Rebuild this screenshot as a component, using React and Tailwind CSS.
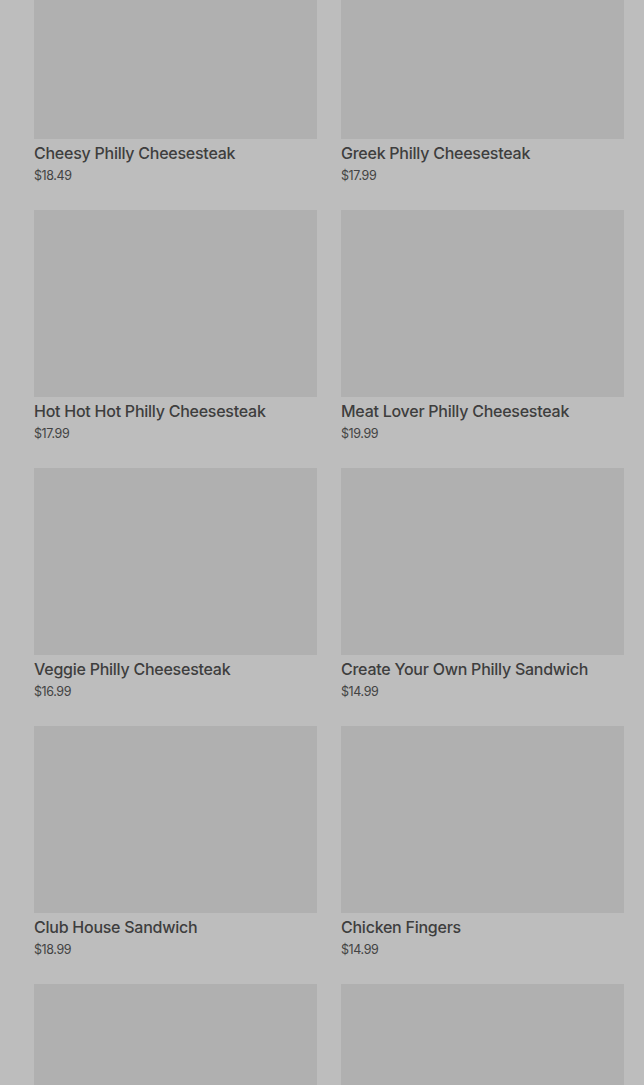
const items = [
  { name: 'Cheesy Philly Cheesesteak', price: '$18.49' },
  { name: 'Greek Philly Cheesesteak', price: '$17.99' },
  { name: 'Hot Hot Hot Philly Cheesesteak', price: '$17.99' },
  { name: 'Meat Lover Philly Cheesesteak', price: '$19.99' },
  { name: 'Veggie Philly Cheesesteak', price: '$16.99' },
  { name: 'Create Your Own Philly Sandwich', price: '$14.99' },
  { name: 'Club House Sandwich', price: '$18.99' },
  { name: 'Chicken Fingers', price: '$14.99' },
  { id: 'more-1' },
  { id: 'more-2' },
];

const MenuCard = ({ name, price }) => (
  <div className="flex flex-col">
    <div className="h-[187px] w-full bg-[#b0b0b0]" />
    {name && (
      <>
        <div className="mt-[3px] text-[16px] leading-[22px] font-medium text-[#3e3e3e] tracking-[-0.25px]">{name}</div>
        <div className="mt-[3px] text-[12.5px] leading-[18px] text-[#434343] tracking-[-0.4px]">{price}</div>
      </>
    )}
  </div>
);

const App = () => {
  return (
    <div
      className="h-[1085px] w-full overflow-hidden bg-[#bdbdbd]"
      style={{ fontFamily: 'Inter, "Noto Sans", sans-serif' }}
    >
      <div className="-mt-[48px] pl-[34px] pr-[20px] grid grid-cols-2 gap-x-[24px] gap-y-[25px]">
        {items.map((item) => (
          <MenuCard key={item.name || item.id} {...item} />
        ))}
      </div>
    </div>
  );
};

export default App;
